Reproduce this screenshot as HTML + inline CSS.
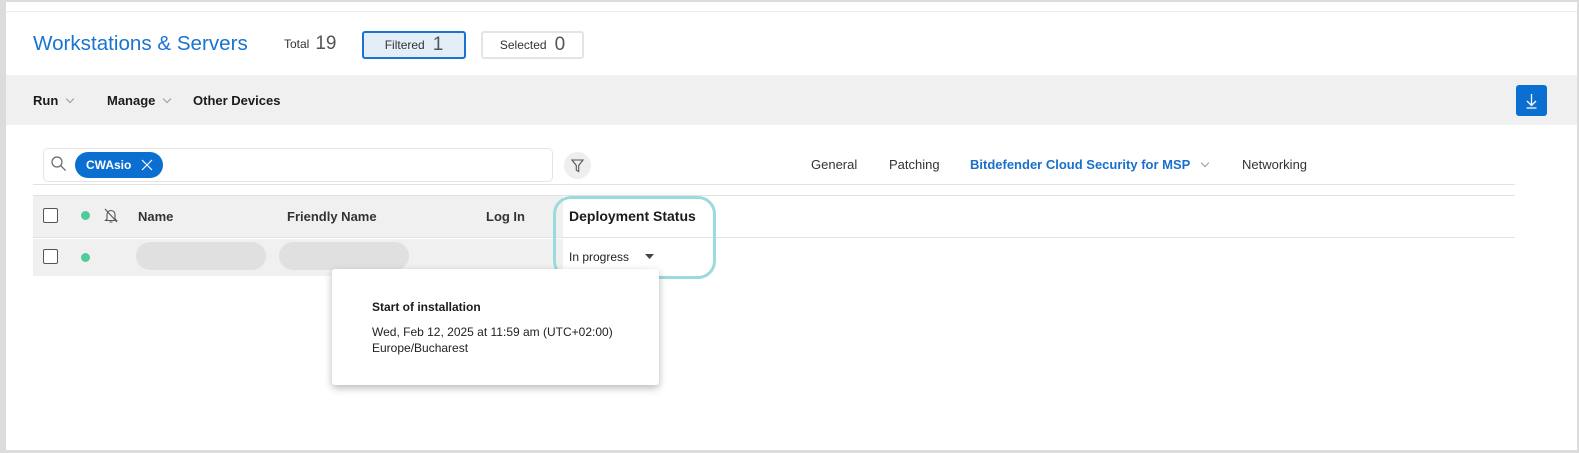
<!DOCTYPE html>
<html><head><meta charset="utf-8"><style>
*{box-sizing:border-box;margin:0;padding:0}
body{width:1579px;height:453px;background:#dcdcdc;font-family:"Liberation Sans",sans-serif;color:#1b1b1b;position:relative;overflow:hidden}
.card{position:absolute;left:6px;top:2px;width:1571px;height:448px;background:#fff}
.abs{position:absolute}
.topline{left:6px;top:11px;width:1571px;height:1px;background:#ececec}
.title{left:33px;top:32px;font-size:20.6px;color:#1a73d1}
.chip{border:2px solid #e4e4e4;border-radius:3px;height:28px;top:31px;font-size:12px;display:flex;align-items:center;justify-content:center;gap:8px;color:#333}
.chip b{font-size:19px;font-weight:normal;color:#555}
.bar{left:6px;top:75px;width:1571px;height:50px;background:#f0f0f0}
.menu{top:93px;font-size:13px;font-weight:bold;color:#1b1b1b}
.caret{display:inline-block;width:6px;height:6px;border-right:1px solid #999;border-bottom:1px solid #999;transform:rotate(45deg);margin-left:9px;position:relative;top:-3px}
.dl{left:1516px;top:85px;width:31px;height:31px;background:#0a6fd0;border-radius:3px}
.search{left:43px;top:148px;width:510px;height:34px;border:1px solid #e4e4e4;border-radius:5px}
.tag{left:75px;top:152px;width:88px;height:26px;background:#0a6fd0;border-radius:13px;color:#fff;font-size:12px;font-weight:bold;padding:6px 0 0 11px}
.filter{left:564px;top:152px;width:27px;height:27px;border-radius:50%;background:#eeeeee}
.tab{top:157px;font-size:13px;color:#333}
.hl{height:1px;background:#e2e2e2}
.hdr{left:33px;top:196px;width:530px;height:42px;background:#f0f0f0}
.row{left:33px;top:239px;width:530px;height:37px;background:#f0f0f0}
.cb{width:15px;height:15px;border:1.3px solid #555;border-radius:2px;background:#fff}
.dot{width:9px;height:9px;border-radius:50%;background:#4fcc99}
.th{top:209px;font-size:13px;font-weight:bold;color:#333}
.pill{top:242px;width:130px;height:28px;border-radius:14px;background:#e0e0e0}
.teal{left:553px;top:196px;width:163px;height:83px;border:3px solid #9adcd9;border-radius:18px}
.pop{left:332px;top:269px;width:327px;height:116px;background:#fff;border-radius:3px;box-shadow:0 3px 8px rgba(0,0,0,.28)}
</style></head><body>
<div class="card"></div>
<div class="abs topline"></div>
<div class="abs title">Workstations &amp; Servers</div>
<div class="abs" style="left:284px;top:33px;font-size:12px;color:#333;display:flex;align-items:center;gap:6px">Total <span style="font-size:19px;color:#555">19</span></div>
<div class="abs chip" style="left:362px;width:104px;border-color:#1a73d1;background:#e3eef9">Filtered <b>1</b></div>
<div class="abs chip" style="left:481px;width:103px">Selected <b>0</b></div>
<div class="abs bar"></div>
<div class="abs menu" style="left:33px">Run<span class="caret"></span></div>
<div class="abs menu" style="left:107px">Manage<span class="caret"></span></div>
<div class="abs menu" style="left:193px">Other Devices</div>
<div class="abs dl"><svg width="31" height="31" viewBox="0 0 31 31"><path d="M15.5 9v11M11 16l4.5 4.5L20 16M10.5 23h10" stroke="#fff" stroke-width="1.3" fill="none"/></svg></div>
<div class="abs search"></div>
<svg class="abs" style="left:50px;top:155px" width="18" height="18" viewBox="0 0 18 18"><circle cx="7" cy="7" r="5" stroke="#666" stroke-width="1.2" fill="none"/><path d="M10.6 10.6l5 5" stroke="#666" stroke-width="1.2"/></svg>
<div class="abs tag">CWAsio</div>
<svg class="abs" style="left:141px;top:159px" width="12" height="12" viewBox="0 0 12 12"><path d="M1 1l10 10M11 1L1 11" stroke="#fff" stroke-width="1.2"/></svg>
<div class="abs filter"><svg width="27" height="27" viewBox="0 0 27 27"><path d="M8 8h11l-4.3 5.5v6l-2.4-1.3v-4.7z" stroke="#555" stroke-width="1.1" fill="none"/></svg></div>
<div class="abs tab" style="left:811px">General</div>
<div class="abs tab" style="left:889px">Patching</div>
<div class="abs tab" style="left:970px;color:#1a6fcc;font-weight:bold">Bitdefender Cloud Security for MSP<span class="caret" style="border-color:#999;margin-left:12px"></span></div>
<div class="abs tab" style="left:1242px">Networking</div>
<div class="abs hl" style="left:33px;top:184px;width:1482px"></div>
<div class="abs hl" style="left:33px;top:195px;width:1482px"></div>
<div class="abs hdr"></div>
<div class="abs hl" style="left:33px;top:237px;width:1482px"></div>
<div class="abs row"></div>
<div class="abs cb" style="left:43px;top:208px"></div>
<div class="abs dot" style="left:81px;top:211px"></div>
<svg class="abs" style="left:103px;top:207px" width="16" height="17" viewBox="0 0 16 17"><path d="M4 12V7.5a4 4 0 0 1 8 0V12l1.5 1.5h-11zM6.5 15h3M2 2l12 13" stroke="#555" stroke-width="1.1" fill="none"/></svg>
<div class="abs th" style="left:138px">Name</div>
<div class="abs th" style="left:287px">Friendly Name</div>
<div class="abs th" style="left:486px">Log In</div>
<div class="abs th" style="left:569px;top:208px;font-size:14px;color:#1b1b1b">Deployment Status</div>
<div class="abs cb" style="left:43px;top:249px"></div>
<div class="abs dot" style="left:81px;top:253px"></div>
<div class="abs pill" style="left:136px"></div>
<div class="abs pill" style="left:279px"></div>
<div class="abs" style="left:569px;top:250px;font-size:12px;color:#222">In progress</div>
<svg class="abs" style="left:645px;top:254px" width="9" height="6"><path d="M0 0h9L4.5 5z" fill="#444"/></svg>
<div class="abs teal"></div>
<div class="abs pop">
<div style="position:absolute;left:40px;top:31px;font-size:12px;font-weight:bold">Start of installation</div>
<div style="position:absolute;left:40px;top:55px;font-size:12px;line-height:16px;color:#222">Wed, Feb 12, 2025 at 11:59 am (UTC+02:00)<br>Europe/Bucharest</div>
</div>
</body></html>
